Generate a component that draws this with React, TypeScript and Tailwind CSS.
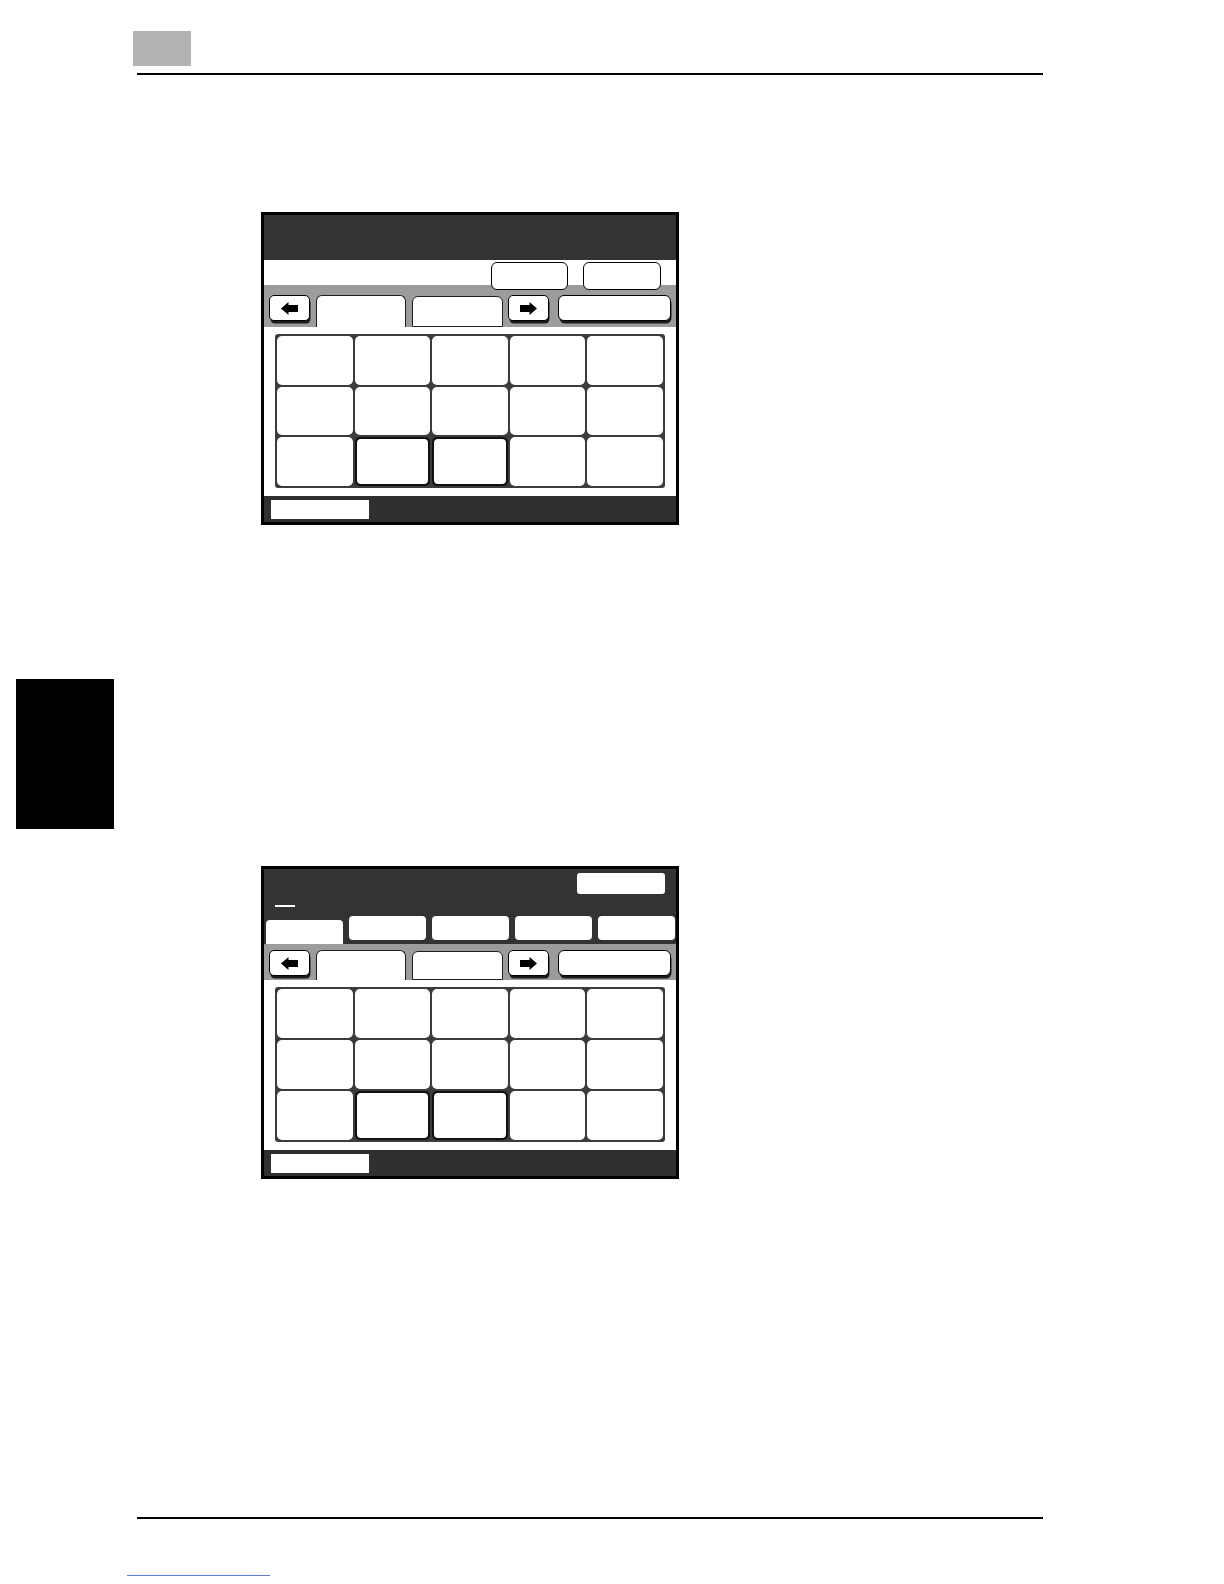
import React from 'react';

const ArrowBtn: React.FC<{ dir: 'left' | 'right' }> = ({ dir }) => (
  <div className="w-[41px] h-[26px] shrink-0 rounded-[5px] border-[1.5px] border-black bg-white flex items-center justify-center shadow-[1px_3px_0_-0.5px_#1a1a1a]">
    <svg width="17" height="13" viewBox="0 0 17 13">
      <path d={dir === 'left' ? 'M0 6.5L7.5 0V3H17V10H7.5V13Z' : 'M17 6.5L9.5 0V3H0V10H9.5V13Z'} fill="#000" />
    </svg>
  </div>
);

// gray strip holding the arrows and the two page tabs
const TabStrip: React.FC<{ height: string; pad: string }> = ({ height, pad }) => (
  <div className={`${height} ${pad} bg-[#9c9c9c] flex items-start pl-[5px]`}>
    <ArrowBtn dir="left" />
    <div className="ml-[6px] w-[90px] self-stretch rounded-t-[6px] border-[1.5px] border-b-0 border-[#1f1f1f] bg-white" />
    <div className="ml-[6px] mt-[1px] w-[91px] self-stretch rounded-t-[6px] border-[1.5px] border-[#1f1f1f] bg-white" />
    <div className="ml-[5px]">
      <ArrowBtn dir="right" />
    </div>
    <div className="ml-[9px] w-[113px] h-[26px] rounded-[6px] border-[1.5px] border-black bg-white shadow-[1px_3px_0_-0.5px_#1a1a1a]" />
  </div>
);

const KeyGrid: React.FC = () => {
  const cells = Array.from({ length: 15 }, (_, i) => i);
  return (
    <div className="flex-1 bg-white px-[11px] pt-[7px] pb-[8px] flex flex-col">
      <div className="flex-1 grid grid-cols-5 grid-rows-3 gap-[2px] p-[2px] bg-[#3c3c3c] rounded-[3px]">
        {cells.map((i) =>
          i === 11 || i === 12 ? (
            <div key={i} className="bg-[#111] rounded-[5px] p-[2px]">
              <div className="w-full h-full bg-white rounded-[4px]" />
            </div>
          ) : (
            <div key={i} className="bg-white rounded-[5px]" />
          )
        )}
      </div>
    </div>
  );
};

const BottomBar: React.FC = () => (
  <div className="h-[26px] bg-[#303030] flex items-center pl-[7px]">
    <div className="w-[98px] h-[19px] bg-white" />
  </div>
);

const ScreenOne: React.FC = () => (
  <div className="w-[418px] h-[313px] border-[3px] border-black bg-[#333] flex flex-col">
    <div className="h-[45px] bg-[#333]" />
    <div className="h-[25px] bg-white flex justify-end items-start gap-[15px] pr-[15px] pt-[2px]">
      <div className="relative z-10 w-[77px] h-[28px] rounded-[6px] border-[1.5px] border-black bg-white" />
      <div className="relative z-10 w-[78px] h-[28px] rounded-[6px] border-[1.5px] border-black bg-white" />
    </div>
    <TabStrip height="h-[42px]" pad="pt-[10px]" />
    <KeyGrid />
    <BottomBar />
  </div>
);

const ScreenTwo: React.FC = () => (
  <div className="w-[418px] h-[313px] border-[3px] border-black bg-[#333] flex flex-col">
    <div className="h-[75px] bg-[#333] flex flex-col">
      <div className="flex justify-end pr-[11px] pt-[4px]">
        <div className="w-[88px] h-[21px] rounded-[3px] bg-white" />
      </div>
      <div className="ml-[11px] mt-[11px] w-[20px] h-[2px] bg-white" />
      <div className="mt-[9px] h-[28px] flex items-start gap-[6px] pl-[2px]">
        <div className="mt-[4px] w-[77px] h-[24px] rounded-t-[4px] bg-white" />
        <div className="w-[77px] h-[24px] rounded-[4px] bg-white" />
        <div className="w-[77px] h-[24px] rounded-[4px] bg-white" />
        <div className="w-[77px] h-[24px] rounded-[4px] bg-white" />
        <div className="w-[77px] h-[24px] rounded-[4px] bg-white" />
      </div>
    </div>
    <TabStrip height="h-[36px]" pad="pt-[6px]" />
    <KeyGrid />
    <BottomBar />
  </div>
);

const App: React.FC = () => {
  return (
    <div className="w-[1224px] h-[1584px] bg-white overflow-hidden font-['Liberation_Sans',sans-serif]">
      {/* page header */}
      <div className="pt-[31px] pl-[133px]">
        <div className="w-[58px] h-[35px] bg-[#b3b3b3]" />
      </div>
      <div className="ml-[137px] mt-[7px] w-[906px] h-[2px] bg-black" />

      <div className="ml-[261px] mt-[137px]">
        <ScreenOne />
      </div>

      {/* chapter tab on the page edge */}
      <div className="ml-[16px] mt-[154px] w-[98px] h-[150px] bg-black" />

      <div className="ml-[261px] mt-[37px]">
        <ScreenTwo />
      </div>

      {/* page footer */}
      <div className="ml-[137px] mt-[338px] w-[906px] h-[2px] bg-black" />
      <div className="ml-[127px] mt-[56px] w-[143px] h-px bg-[#5b7bd5]" />
    </div>
  );
};

export default App;
